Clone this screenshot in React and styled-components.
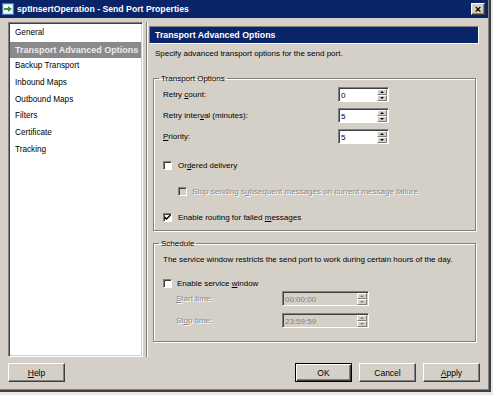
import React from 'react';
import styled, { createGlobalStyle } from 'styled-components';

const GlobalStyle = createGlobalStyle`
  html, body { margin: 0; padding: 0; background: #e8e8e8; }
  body { font-family: "Liberation Sans", Arial, sans-serif; font-size: 8px; color: #000; }
  * { box-sizing: border-box; }
`;

const Win = styled.div`
  width: 491px;
  height: 392px;
  background: #d4d0c8;
  border-right: 2px solid #404040;
  border-bottom: 2px solid #404040;
  box-shadow: inset -1px -1px 0 #808080;
  display: flex;
  flex-direction: column;
`;

const TitleBar = styled.div`
  height: 18px;
  margin-right: 1px;
  background: #0a246a;
  display: flex;
  align-items: center;
  padding: 0 3px 0 2px;
  gap: 3px;
`;

const Title = styled.span`
  color: #fff;
  font-weight: bold;
  font-size: 8.7px;
`;

const CloseBtn = styled.div`
  margin-left: auto;
  width: 14px;
  height: 12px;
  background: #d4d0c8;
  border: 1px solid;
  border-color: #fff #404040 #404040 #fff;
  box-shadow: inset -1px -1px 0 #808080;
  display: flex;
  align-items: center;
  justify-content: center;
  font-size: 11px;
  font-weight: bold;
  line-height: 1;
`;

const Content = styled.div`
  display: flex;
  padding: 4px 0 0 8px;
`;

const List = styled.ul`
  list-style: none;
  margin: 0;
  padding: 2px 0 0;
  width: 135px;
  height: 335px;
  background: #fff;
  border: 1px solid;
  border-color: #808080 #fff #fff #808080;
  box-shadow: inset 1px 1px 0 #404040, inset -1px -1px 0 #d4d0c8;
`;

const Item = styled.li`
  height: 16.7px;
  line-height: 16.7px;
  margin: 0 1px;
  padding-left: 5px;
  font-size: ${p => (p.$active ? 9 : 8.2)}px;
  white-space: nowrap;
  background: ${p => (p.$active ? '#8a8a8a' : 'transparent')};
  color: ${p => (p.$active ? '#ececec' : '#000')};
  font-weight: ${p => (p.$active ? 'bold' : 'normal')};
`;

const Panel = styled.div`
  margin-left: 3px;
  width: 341px;
  border-left: 1px solid #808080;
  box-shadow: inset 1px 0 0 #fff;
  padding: 4px 8px 0 2px;
  display: flex;
  flex-direction: column;
`;

const Header = styled.div`
  height: 18px;
  background: #0a246a;
  color: #fff;
  font-weight: bold;
  font-size: 8.8px;
  display: flex;
  align-items: center;
  padding-left: 5px;
  border: 1px solid;
  border-color: #808080 #fff #fff #808080;
`;

const Desc = styled.p`
  margin: 4px 0 0 6px;
  line-height: 11px;
`;

const Group = styled.fieldset`
  margin: ${p => p.$top}px 3px 0 4px;
  padding: ${p => p.$pt}px 8px ${p => p.$pb}px 9px;
  min-width: 0;
  border: 1px solid #808080;
  box-shadow: 1px 1px 0 #fff, inset 1px 1px 0 #fff;
`;

const Legend = styled.legend`
  margin-left: -4px;
  padding: 0 2px;
  line-height: 11px;
`;

const Row = styled.div`
  display: flex;
  align-items: center;
  height: ${p => p.$h || 16}px;
  margin-top: ${p => p.$mt || 0}px;
  padding-left: ${p => p.$indent || 0}px;
`;

const Label = styled.span`
  width: ${p => p.$w}px;
  flex: none;
  color: ${p => (p.$off ? '#8a8a8a' : '#000')};
  text-shadow: ${p => (p.$off ? '1px 1px 0 #fff' : 'none')};
`;

const U = styled.span`
  text-decoration: underline;
`;

const Text = styled.span`
  color: ${p => (p.$off ? '#8a8a8a' : '#000')};
  text-shadow: ${p => (p.$off ? '1px 1px 0 #fff' : 'none')};
  margin-left: ${p => p.$ml || 0}px;
`;

const Box = styled.span`
  width: 9px;
  height: 9px;
  flex: none;
  background: ${p => (p.$off ? '#d4d0c8' : '#fff')};
  border: 1px solid;
  border-color: #808080 #fff #fff #808080;
  box-shadow: inset 1px 1px 0 #404040;
  display: flex;
  align-items: center;
  justify-content: center;
`;

const Spin = styled.div`
  width: ${p => p.$w}px;
  height: 15px;
  display: flex;
  background: ${p => (p.$off ? '#d4d0c8' : '#fff')};
  border: 1px solid;
  border-color: #808080 #fff #fff #808080;
  box-shadow: inset 1px 1px 0 #404040;
  padding: 1px 1px 0 2px;
`;

const SpinValue = styled.span`
  flex: 1;
  line-height: 13px;
  color: ${p => (p.$off ? '#808080' : '#000')};
`;

const Arrows = styled.div`
  width: 10px;
  display: flex;
  flex-direction: column;
`;

const ArrowBtn = styled.div`
  flex: 1;
  background: #d4d0c8;
  border: 1px solid;
  border-color: #fff #808080 #808080 #fff;
  display: flex;
  align-items: center;
  justify-content: center;
  &::after {
    content: '';
    border-left: 2.5px solid transparent;
    border-right: 2.5px solid transparent;
    ${p => (p.$down ? 'border-top' : 'border-bottom')}: 2px solid ${p => (p.$off ? '#808080' : '#000')};
  }
`;

const Footer = styled.div`
  display: flex;
  gap: 7px;
  padding: 6px 9px 0 8px;
`;

const Button = styled.button`
  width: 57px;
  height: 19px;
  padding: 0;
  font-family: inherit;
  font-size: 8.5px;
  color: #000;
  background: #d4d0c8;
  border: 1px solid;
  border-color: ${p => (p.$def ? '#000' : '#fff #404040 #404040 #fff')};
  box-shadow: ${p =>
    p.$def
      ? 'inset 1px 1px 0 #fff, inset -1px -1px 0 #404040, inset -2px -2px 0 #808080'
      : 'inset -1px -1px 0 #808080'};
  margin-left: ${p => (p.$push ? 'auto' : '0')};
`;

const pages = [
  'General',
  'Transport Advanced Options',
  'Backup Transport',
  'Inbound Maps',
  'Outbound Maps',
  'Filters',
  'Certificate',
  'Tracking',
];

function AppIcon() {
  return (
    <svg width="12" height="12" viewBox="0 0 12 12">
      <rect x="0.5" y="0.5" width="11" height="11" fill="#c8def2" stroke="#4a78b0" />
      <rect x="2" y="2" width="8" height="8" fill="#fff" />
      <path d="M2 5h4V3l4 3-4 3V7H2z" fill="#2f9a3c" />
    </svg>
  );
}

function Check() {
  return (
    <svg width="7" height="7" viewBox="0 0 7 7">
      <path d="M0.5 3l2 2 4-4" fill="none" stroke="#000" strokeWidth="1.5" />
    </svg>
  );
}

function SpinBox({ value, w = 51, off }) {
  return (
    <Spin $w={w} $off={off}>
      <SpinValue $off={off}>{value}</SpinValue>
      <Arrows>
        <ArrowBtn $off={off} />
        <ArrowBtn $off={off} $down />
      </Arrows>
    </Spin>
  );
}

export default function App() {
  return (
    <>
      <GlobalStyle />
      <Win>
        <TitleBar>
          <AppIcon />
          <Title>sptInsertOperation - Send Port Properties</Title>
          <CloseBtn>×</CloseBtn>
        </TitleBar>

        <Content>
          <List>
            {pages.map(p => (
              <Item key={p} $active={p === 'Transport Advanced Options'}>{p}</Item>
            ))}
          </List>

          <Panel>
            <Header>Transport Advanced Options</Header>
            <Desc>Specify advanced transport options for the send port.</Desc>

            <Group $top={14} $pt={2} $pb={6}>
              <Legend>Transport Options</Legend>
              <Row>
                <Label $w={175}>Retry <U>c</U>ount:</Label>
                <SpinBox value="0" />
              </Row>
              <Row $mt={5}>
                <Label $w={175}>Retry inter<U>v</U>al (minutes):</Label>
                <SpinBox value="5" />
              </Row>
              <Row $mt={5}>
                <Label $w={175}><U>P</U>riority:</Label>
                <SpinBox value="5" />
              </Row>
              <Row $h={13} $mt={15}>
                <Box />
                <Text $ml={6}>Or<U>d</U>ered delivery</Text>
              </Row>
              <Row $h={13} $mt={13} $indent={15}>
                <Box $off />
                <Text $ml={5} $off>Stop sending s<U>u</U>bsequent messages on current message failure</Text>
              </Row>
              <Row $h={13} $mt={13}>
                <Box><Check /></Box>
                <Text $ml={6}>Enable routing for failed <U>m</U>essages</Text>
              </Row>
            </Group>

            <Group $top={7} $pt={5} $pb={13}>
              <Legend>Schedule</Legend>
              <Row $h={11}>
                <Text>The service window restricts the send port to work during certain hours of the day.</Text>
              </Row>
              <Row $h={13} $mt={12}>
                <Box />
                <Text $ml={5}>Enable service <U>w</U>indow</Text>
              </Row>
              <Row $h={15} $mt={1} $indent={13}>
                <Label $w={106} $off><U>S</U>tart time:</Label>
                <SpinBox value="00:00:00" w={87} off />
              </Row>
              <Row $h={15} $mt={7} $indent={13}>
                <Label $w={106} $off>St<U>o</U>p time:</Label>
                <SpinBox value="23:59:59" w={87} off />
              </Row>
            </Group>
          </Panel>
        </Content>

        <Footer>
          <Button><U>H</U>elp</Button>
          <Button $push $def>OK</Button>
          <Button>Cancel</Button>
          <Button><U>A</U>pply</Button>
        </Footer>
      </Win>
    </>
  );
}
